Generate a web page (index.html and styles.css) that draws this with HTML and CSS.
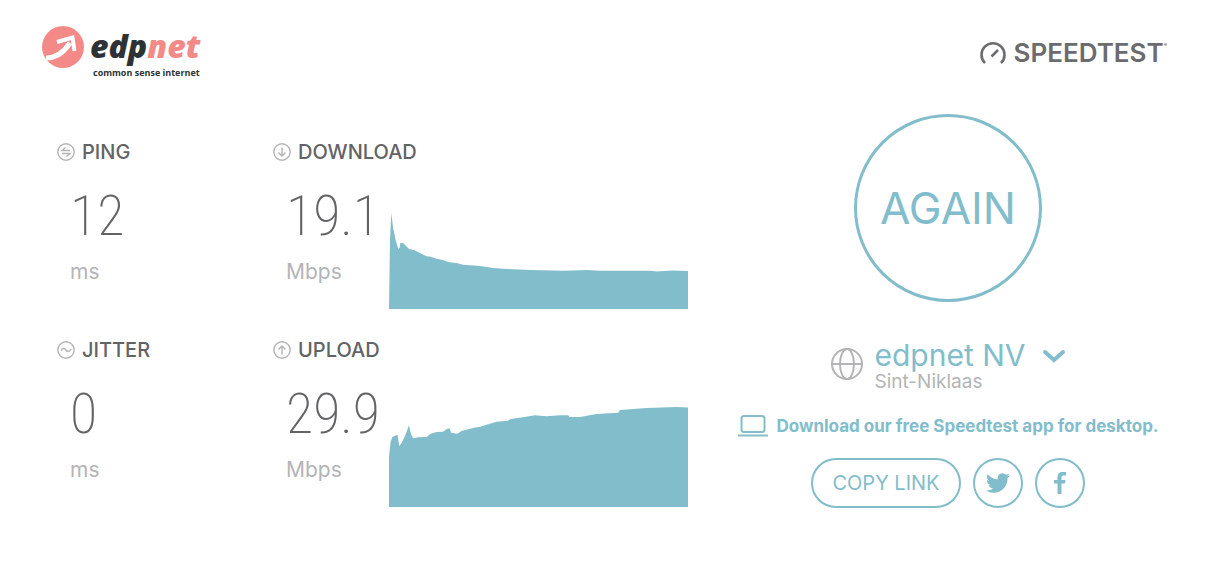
FILE: index.html
```html
<!DOCTYPE html>
<html lang="en">
<head>
    <meta charset="UTF-8">
    <meta name="viewport" content="width=device-width, initial-scale=1.0">
    <title>edpnet Speedtest</title>
    <link rel="stylesheet" href="styles.css">
</head>
<body>
    <header class="header">
        <a class="brand" href="#">
            <svg class="brand-mark" viewBox="0 0 42 42" aria-hidden="true">
                <circle cx="21" cy="21" r="21" fill="#f48a87"/>
                <path d="M4 32C14 32 22 26 28 17" fill="none" stroke="#fff" stroke-width="5"/>
                <path d="M15 16L30.500 11.500L32.500 25" fill="none" stroke="#fff" stroke-width="4"/>
            </svg>
            <span class="brand-text">
                <span class="brand-name">edp<span class="brand-accent">net</span></span>
                <span class="brand-tagline">common sense internet</span>
            </span>
        </a>
        <a class="speedtest" href="#">
            <svg class="speedtest-mark" viewBox="0 0 26 24" aria-hidden="true">
                <path d="M5 22A11.500 11.500 0 1 1 21 22M11.500 15.500L18 9" fill="none" stroke="#6b6c6e" stroke-width="2.600"/>
            </svg>
            <span>SPEEDTEST</span><span class="trademark">®</span>
        </a>
    </header>

    <main class="main">
        <div class="results">
            <section class="stat">
                <h2 class="stat-title">
                    <svg class="stat-icon" viewBox="0 0 18 18" aria-hidden="true">
                        <circle cx="9" cy="9" r="8.200"/>
                        <path d="M13 7.500H5L8.500 4.500M5 10.500H13L9.500 13.500"/>
                    </svg>
                    PING
                </h2>
                <div class="stat-body">
                    <div class="reading">
                        <span class="value">12</span>
                        <span class="unit">ms</span>
                    </div>
                </div>
            </section>

            <section class="stat">
                <h2 class="stat-title">
                    <svg class="stat-icon" viewBox="0 0 18 18" aria-hidden="true">
                        <circle cx="9" cy="9" r="8.200"/>
                        <path d="M9 4.500V13M5.500 9.500L9 13L12.500 9.500"/>
                    </svg>
                    DOWNLOAD
                </h2>
                <div class="stat-body">
                    <div class="reading">
                        <span class="value">19.1</span>
                        <span class="unit">Mbps</span>
                    </div>
                    <svg class="chart" viewBox="0 0 299 100" preserveAspectRatio="none" aria-hidden="true">
                        <path d="M0 100L1 30L2.300 4L4 18L6.600 31L9.300 40L10.600 39L11.300 34H14L16.600 36.500L20 40L25 41L31 44L37.600 47.300L41.600 47.700L47.600 49.700L54.300 51.300L60.300 53.300L67.600 54L74 55.700L91 57L104 59L118 60L141 61L174 61.700L198 61L211 61.800H262L268 62.500L283 61.500L299 62V100Z"/>
                    </svg>
                </div>
            </section>

            <section class="stat">
                <h2 class="stat-title">
                    <svg class="stat-icon" viewBox="0 0 18 18" aria-hidden="true">
                        <circle cx="9" cy="9" r="8.200"/>
                        <path d="M4 10C5.500 6.500 7.500 7 9 9S12.500 11.500 14 8"/>
                    </svg>
                    JITTER
                </h2>
                <div class="stat-body">
                    <div class="reading">
                        <span class="value">0</span>
                        <span class="unit">ms</span>
                    </div>
                </div>
            </section>

            <section class="stat">
                <h2 class="stat-title">
                    <svg class="stat-icon" viewBox="0 0 18 18" aria-hidden="true">
                        <circle cx="9" cy="9" r="8.200"/>
                        <path d="M9 13.500V5M5.500 8.500L9 5L12.500 8.500"/>
                    </svg>
                    UPLOAD
                </h2>
                <div class="stat-body">
                    <div class="reading">
                        <span class="value">29.9</span>
                        <span class="unit">Mbps</span>
                    </div>
                    <svg class="chart" viewBox="0 0 299 100" preserveAspectRatio="none" aria-hidden="true">
                        <path d="M0 100V50L1.500 35L3.300 30.300L6 28.700L8.600 27.700L9.300 33L10.300 39.300L12.300 36.300L15 31.300L17.600 24.700L20 18.300L21.600 25.700L24 31.300L29.300 30.300L37.600 30L41.600 26.700L47.600 25L54.300 24.700L57.600 22L60.600 21.300L62 25.700L68.300 26.700L72.600 24L84 21L91 19.700L107.600 14.700L119 13.700L121.600 12L134 10.300L146 8.300L157.600 9.300L171 8.300H179.300L180.300 10H191L207.600 7L229.300 5.700L231 3L257.600 1L287.600 0L299 .5V100Z"/>
                    </svg>
                </div>
            </section>
        </div>

        <aside class="panel">
            <button class="again">AGAIN</button>

            <button class="server">
                <svg class="globe" viewBox="0 0 32 32" aria-hidden="true">
                    <circle cx="16" cy="16" r="15"/>
                    <ellipse cx="16" cy="16" rx="7" ry="15"/>
                    <path d="M1 16H31"/>
                </svg>
                <span class="server-text">
                    <span class="server-name">edpnet NV
                        <svg class="chevron" viewBox="0 0 24 14" aria-hidden="true">
                            <path d="M3 3L12 11L21 3"/>
                        </svg>
                    </span>
                    <span class="server-city">Sint-Niklaas</span>
                </span>
            </button>

            <a class="desktop-link" href="#">
                <svg class="laptop" viewBox="0 0 32 22" aria-hidden="true">
                    <rect x="4.500" y="1" width="23" height="16" rx="2.500"/>
                    <path d="M1 20.500H31"/>
                </svg>
                Download our free Speedtest app for desktop.
            </a>

            <div class="share">
                <button class="share-button copy">COPY LINK</button>
                <button class="share-button round" aria-label="Share on Twitter">
                    <svg class="twitter" viewBox="0 0 24 24" aria-hidden="true">
                        <path d="M23.953 4.570a10 10 0 0 1-2.825.775 4.958 4.958 0 0 0 2.163-2.723c-.951.555-2.005.959-3.127 1.184a4.920 4.920 0 0 0-8.384 4.482C7.690 8.095 4.067 6.130 1.640 3.162a4.822 4.822 0 0 0-.666 2.475c0 1.710.870 3.213 2.188 4.096a4.904 4.904 0 0 1-2.228-.616v.060a4.923 4.923 0 0 0 3.946 4.827 4.996 4.996 0 0 1-2.212.085 4.936 4.936 0 0 0 4.604 3.417 9.867 9.867 0 0 1-6.102 2.105c-.390 0-.779-.023-1.170-.067a13.995 13.995 0 0 0 7.557 2.209c9.053 0 13.998-7.496 13.998-13.985 0-.210 0-.420-.015-.630A9.935 9.935 0 0 0 24 4.590z"/>
                    </svg>
                </button>
                <button class="share-button round" aria-label="Share on Facebook">
                    <svg class="facebook" viewBox="0 0 12 22" aria-hidden="true">
                        <path d="M3.500 22V11.500H0V8H3.500V5.500C3.500 1.800 5.500 0 8.500 0H12V3.600H9.500C8 3.600 7.500 4.300 7.500 5.600V8H11.500L11 11.500H7.500V22Z"/>
                    </svg>
                </button>
            </div>
        </aside>
    </main>
</body>
</html>
```
FILE: styles.css
```css
* {
    box-sizing: border-box;
}

body {
    margin: 0;
    background: #fff;
    color: #626365;
    font-family: Inter, "Liberation Sans", sans-serif;
}

a {
    color: inherit;
    text-decoration: none;
}

button {
    padding: 0;
    border: none;
    background: none;
    color: #82bdcb;
    font-family: inherit;
    cursor: pointer;
}

.header {
    display: flex;
    justify-content: space-between;
    align-items: flex-start;
    padding: 26px 38px 0 42px;
}

.brand {
    display: flex;
    gap: 6px;
}

.brand-mark {
    width: 42px;
    height: 42px;
}

.brand-text {
    display: flex;
    flex-direction: column;
    font-family: "Open Sans", sans-serif;
    font-weight: 700;
    color: #2e3234;
}

.brand-name {
    font-size: 32px;
    font-style: italic;
    font-weight: 800;
    line-height: 40px;
}

.brand-accent {
    color: #f48a87;
}

.brand-tagline {
    padding-left: 3px;
    font-size: 9px;
    line-height: 14px;
}

.speedtest {
    display: flex;
    align-items: center;
    padding-top: 11px;
    font-size: 26px;
    font-weight: 600;
    line-height: 32px;
    color: #6b6c6e;
}

.speedtest-mark {
    width: 26px;
    height: 24px;
    margin-right: 8px;
}

.trademark {
    align-self: flex-start;
    font-size: 5px;
    line-height: 16px;
}

.main {
    display: grid;
    grid-template-columns: 1fr 438px;
    column-gap: 41px;
    padding: 34px 38px 32px 57px;
}

.results {
    display: grid;
    grid-template-columns: 216px 1fr;
    row-gap: 31px;
    align-content: start;
    padding-top: 28px;
}

.stat-title {
    display: flex;
    align-items: center;
    gap: 7px;
    margin: 0;
    font-size: 20px;
    font-weight: 500;
    line-height: 20px;
}

.stat-icon {
    width: 18px;
    height: 18px;
    fill: none;
    stroke: #b4b4b6;
    stroke-width: 1.4;
}

.stat-body {
    display: flex;
    align-items: flex-end;
    height: 147px;
}

.reading {
    display: flex;
    flex-direction: column;
    flex: 0 0 116px;
    padding: 0 0 25px 13px;
}

.value {
    font-family: "Roboto Condensed", Roboto, sans-serif;
    font-size: 56px;
    font-weight: 200;
    line-height: 68px;
}

.unit {
    margin-top: 10px;
    font-size: 21px;
    line-height: 24px;
    color: #b4b4b6;
}

.chart {
    flex: 1;
    min-width: 0;
    height: 100px;
    fill: #82bdcb;
}

.panel {
    display: flex;
    flex-direction: column;
    align-items: center;
}

.again {
    width: 188px;
    height: 188px;
    border: 3px solid #82bdcb;
    border-radius: 50%;
    font-size: 44px;
}

.server {
    display: flex;
    align-items: flex-start;
    gap: 12px;
    margin-top: 38px;
    text-align: left;
}

.globe {
    width: 32px;
    height: 32px;
    margin-top: 8px;
    fill: none;
    stroke: #b4b4b6;
    stroke-width: 2;
}

.server-text,
.server-name {
    display: flex;
}

.server-text {
    flex-direction: column;
}

.server-name {
    align-items: center;
    gap: 16px;
    font-size: 30px;
    line-height: 31px;
}

.chevron {
    width: 24px;
    height: 14px;
    fill: none;
    stroke: #82bdcb;
    stroke-width: 4;
    stroke-linecap: round;
}

.server-city {
    font-size: 19px;
    line-height: 22px;
    color: #b4b4b6;
}

.desktop-link {
    display: flex;
    align-items: center;
    gap: 7px;
    margin-top: 21px;
    font-size: 17px;
    font-weight: 700;
    line-height: 24px;
    color: #82bdcb;
    white-space: nowrap;
}

.laptop {
    width: 32px;
    height: 22px;
    fill: none;
    stroke: #82bdcb;
    stroke-width: 2;
}

.share {
    display: flex;
    gap: 12px;
    margin-top: 20px;
}

.share-button {
    display: flex;
    align-items: center;
    justify-content: center;
    height: 50px;
    border: 2px solid #82bdcb;
    border-radius: 25px;
    fill: #82bdcb;
}

.copy {
    width: 150px;
    font-size: 20px;
}

.round {
    width: 50px;
}

.twitter {
    width: 24px;
    height: 24px;
}

.facebook {
    width: 12px;
    height: 22px;
}
```
